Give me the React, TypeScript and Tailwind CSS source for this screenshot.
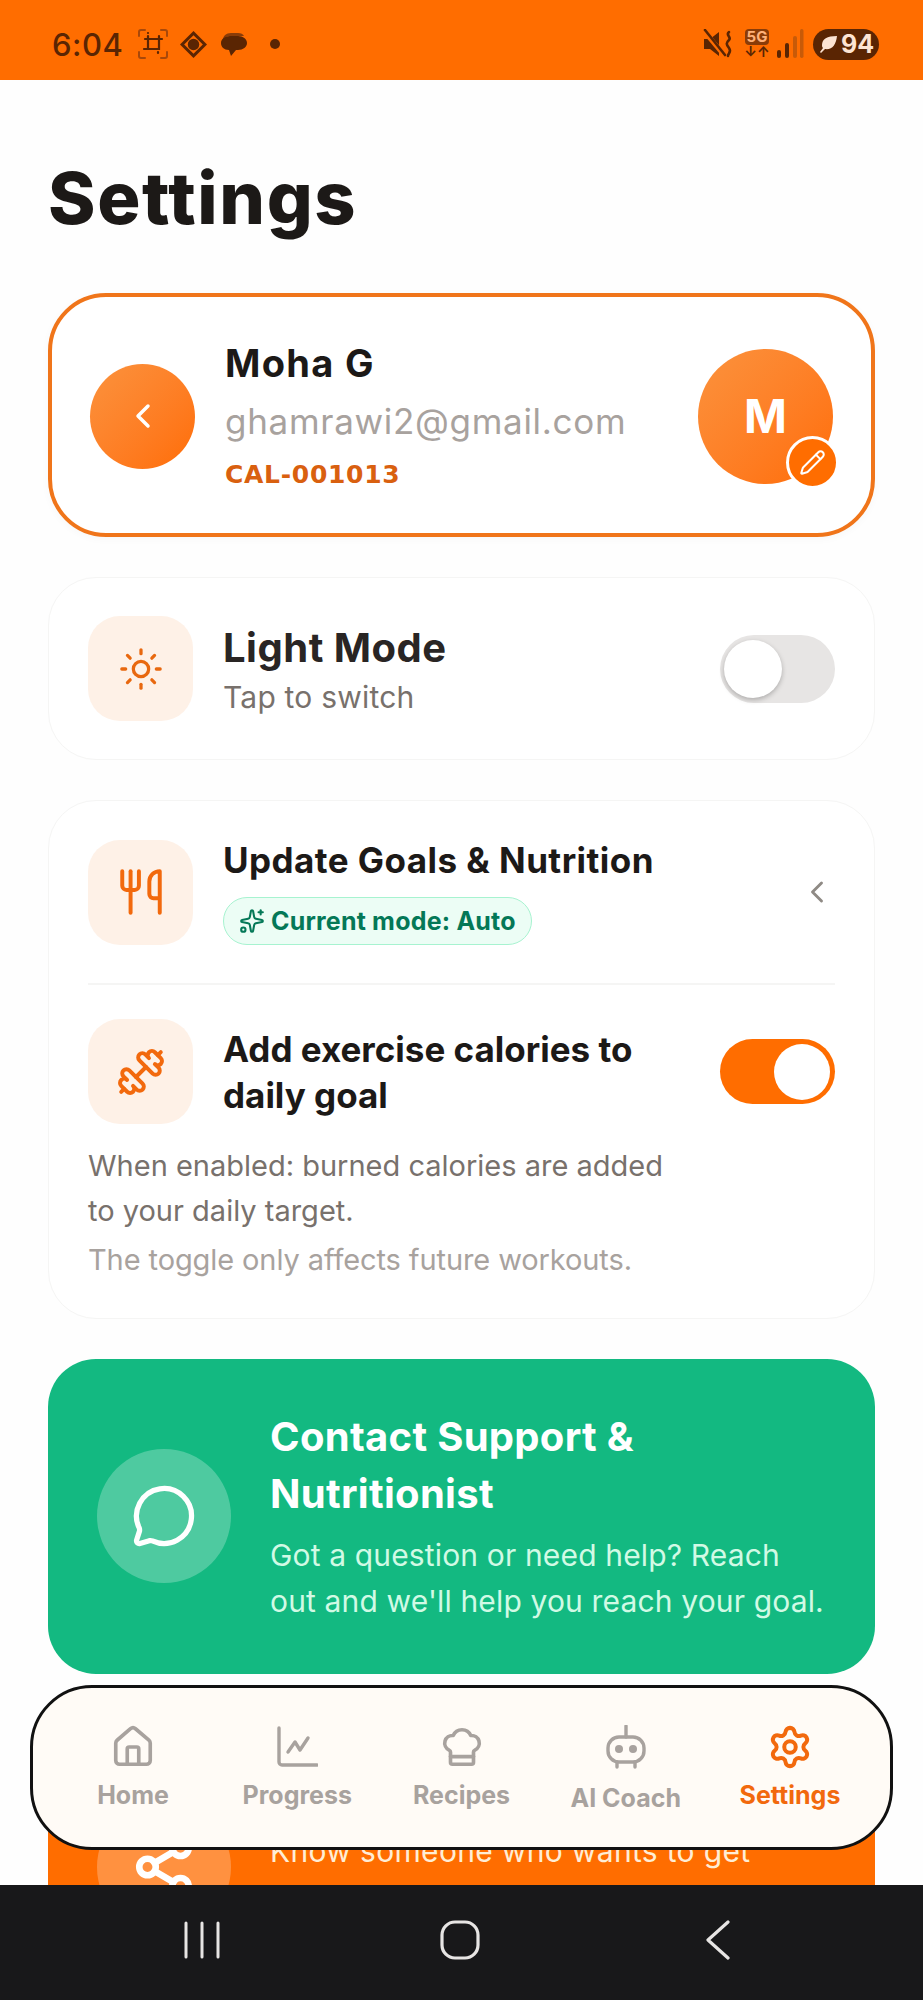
import React from "react";
import { ChevronLeft, Sun, Utensils, Dumbbell, Sparkles, MessageCircle, Share2, House, ChefHat, Settings, Pencil } from "lucide-react";

const Crop = () => (
  <svg width="32" height="32" viewBox="0 0 32 32" fill="none" strokeLinecap="round">
    <path d="M2 8V4a2 2 0 0 1 2-2h4M24 2h4a2 2 0 0 1 2 2v4M30 24v4a2 2 0 0 1-2 2h-4M8 30H4a2 2 0 0 1-2-2v-4" stroke="#a8480a" strokeWidth="2" />
    <path d="M7 21h15V8M11 5v0M11 8v13M8 11h17M21 24v1" stroke="#5a2503" strokeWidth="2.2" />
  </svg>
);
const Diamond = () => (
  <svg width="27" height="27" viewBox="0 0 26 26">
    <path d="M13 0l13 13-13 13L0 13z" fill="#5a2503" />
    <path d="M13 4l9 9-9 9-9-9z" fill="#ff6d00" />
    <circle cx="13" cy="13" r="5.5" fill="#5a2503" />
  </svg>
);
const Chat = () => (
  <svg width="28" height="26" viewBox="0 0 28 26">
    <path d="M3 9c0-4 3-7 8-7h7c3 0 5 1 6 3H10C6 5 4 7 3 9z" fill="#8a3c08" />
    <path d="M1 12c0-4 4-7 9-7h8c5 0 9 3 9 7s-4 7-9 7h-2l-5 6-2-6C4 19 1 16 1 12z" fill="#5a2503" />
  </svg>
);
const Mute = () => (
  <svg width="32" height="30" viewBox="0 0 32 30" fill="none">
    <path d="M1 10h6l9-7v24l-9-7H1z" fill="#5a2503" />
    <path d="M1 2l20 24" stroke="#ff6d00" strokeWidth="5" />
    <path d="M2 1l20 25" stroke="#5a2503" strokeWidth="2.6" strokeLinecap="round" />
    <path d="M26 3c-4 3 3 5 0 8s-3 4 0 8-1 5-1 8" stroke="#5a2503" strokeWidth="2.6" strokeLinecap="round" />
  </svg>
);
const Signal = () => (
  <svg width="28" height="30" viewBox="0 0 28 30">
    <rect x="1" y="21" width="4" height="8" rx="2" fill="#5a2503" />
    <rect x="9" y="14" width="4" height="15" rx="2" fill="#5a2503" />
    <rect x="17" y="7" width="4" height="22" rx="2" fill="#c85a08" />
    <rect x="24" y="0" width="3.5" height="29" rx="1.7" fill="#c85a08" />
  </svg>
);
const Leaf = () => (
  <svg width="20" height="18" viewBox="0 0 20 18">
    <path d="M19 1C9 1 4 4 4 10c0 1 0 2 1 3L2 17l1 1 4-4c7 1 11-4 12-13z" fill="#fde4d3" />
  </svg>
);
const Progress = () => (
  <svg width="42" height="42" viewBox="0 0 42 42" fill="none" stroke="#a8a29e" strokeWidth="3.4" strokeLinecap="round" strokeLinejoin="round">
    <path d="M3 2v34a3 3 0 0 0 3 3h35" />
    <path d="M12 26l7-10 5 8 8-12" />
  </svg>
);
const BotIcon = () => (
  <svg width="42" height="44" viewBox="0 0 42 44" fill="none">
    <path d="M21 1v11" stroke="#a8a29e" strokeWidth="3.4" strokeLinecap="round" />
    <rect x="3" y="12" width="36" height="25" rx="11" stroke="#a8a29e" strokeWidth="3.4" />
    <circle cx="14" cy="24" r="4" fill="#a8a29e" />
    <circle cx="28" cy="24" r="4" fill="#a8a29e" />
    <path d="M12 37v5M30 37v5" stroke="#a8a29e" strokeWidth="3.4" strokeLinecap="round" />
  </svg>
);

const Tile = ({ children }: { children: React.ReactNode }) => (
  <div className="flex h-[105px] w-[105px] flex-none items-center justify-center rounded-[32px] bg-[#fef1e7]">{children}</div>
);

const nav = [
  { label: "Home", icon: <House size={46} strokeWidth={1.9} color="#a8a29e" />, active: false },
  { label: "Progress", icon: <Progress />, active: false },
  { label: "Recipes", icon: <ChefHat size={46} strokeWidth={1.9} color="#a8a29e" />, active: false },
  { label: "AI Coach", icon: <BotIcon />, active: false },
  { label: "Settings", icon: <Settings size={46} strokeWidth={2.1} color="#f2690d" />, active: true },
];

export default function App() {
  return (
    <div className="flex h-[2000px] w-[923px] flex-col overflow-hidden bg-[#fefefe] font-[Inter,sans-serif]">
      <div className="flex h-[80px] flex-none items-center justify-between bg-[#ff6d00] pl-[52px] pr-[44px] pt-[8px] text-[#5a2503]">
        <div className="flex items-center">
          <span className="mr-[14px] text-[31px] font-medium leading-none tracking-[0.5px]">6:04</span>
          <Crop />
          <span className="ml-[11px]"><Diamond /></span>
          <span className="ml-[13px]"><Chat /></span>
          <span className="ml-[22px] h-[10px] w-[10px] rounded-full bg-[#5a2503]" />
        </div>
        <div className="flex items-center">
          <Mute />
          <div className="ml-[8px] flex w-[28px] flex-col items-center">
            <span className="rounded-[4px] bg-[#8a3c08] px-[2px] text-[15px] font-bold leading-[16px] text-[#ffb27a]">5G</span>
            <span className="text-[14px] font-bold leading-[14px]">↓↑</span>
          </div>
          <span className="ml-[5px]"><Signal /></span>
          <div className="ml-[9px] flex h-[31px] w-[66px] items-center justify-center gap-[3px] rounded-full bg-[#5a2503] text-[25px] font-bold leading-none text-[#fde4d3]">
            <Leaf />
            94
          </div>
        </div>
      </div>

      <div className="relative min-h-0 flex-1 overflow-hidden">
        <div className="px-[48px] pt-[78px]">
          <h1 className="mb-[55px] text-[72px] font-extrabold leading-[80px] tracking-[1.6px] text-[#1c1917]">Settings</h1>

          <div className="flex items-center rounded-[58px] border-[4px] border-[#f0751a] bg-white px-[38px] pb-[41px] pt-[43px] shadow-[0_2px_8px_rgba(0,0,0,0.03)]">
            <div className="flex h-[105px] w-[105px] flex-none items-center justify-center rounded-full bg-linear-to-br from-[#fb923c] to-[#ff6d00] text-white">
              <ChevronLeft size={40} strokeWidth={2.1} />
            </div>
            <div className="ml-[30px] flex-1">
              <div className="text-[38px] font-bold leading-[46px] tracking-[1.3px] text-[#1c1917]">Moha G</div>
              <div className="mt-[10px] text-[35px] leading-[50px] tracking-[0.7px] text-[#a8a29e]">ghamrawi2@gmail.com</div>
              <div className="mt-[12px] font-['DejaVu_Sans',sans-serif] text-[25px] font-bold leading-[34px] tracking-[0.7px] text-[#d9600f]">CAL-001013</div>
            </div>
            <div className="relative flex h-[135px] w-[135px] flex-none items-center justify-center rounded-full bg-linear-to-br from-[#fb923c] to-[#ff6d00] text-[46px] font-bold text-white">
              M
              <div className="absolute bottom-[-5px] right-[-6px] flex h-[53px] w-[53px] items-center justify-center rounded-full border-[3px] border-white bg-[#ff6d00]">
                <Pencil size={27} strokeWidth={1.8} color="#fff" />
              </div>
            </div>
          </div>

          <div className="mt-[40px] flex items-center rounded-[48px] border border-[#f5f5f4] bg-white px-[39px] py-[38px]">
            <Tile><Sun size={46} strokeWidth={1.7} color="#e8680f" /></Tile>
            <div className="ml-[30px] flex-1 pt-[5px]">
              <div className="text-[40px] font-bold leading-[46px] tracking-[0.5px] text-[#292524]">Light Mode</div>
              <div className="mt-[6px] text-[30px] leading-[40px] tracking-[0.2px] text-[#78716c]">Tap to switch</div>
            </div>
            <div className="flex h-[68px] w-[115px] flex-none items-center rounded-full bg-[#e7e5e4] p-[4px]">
              <div className="h-[58px] w-[58px] rounded-full bg-white shadow-[0_2px_5px_rgba(0,0,0,0.25)]" />
            </div>
          </div>

          <div className="mt-[40px] rounded-[48px] border border-[#f5f5f4] bg-white px-[39px] pb-[36px] pt-[38px]">
            <div className="flex items-center border-b-2 border-[#f5f5f4] pb-[38px]">
              <Tile><Utensils size={50} strokeWidth={1.9} color="#f2690d" /></Tile>
              <div className="ml-[30px] flex-1">
                <div className="text-[35px] font-bold leading-[42px] tracking-[0.45px] text-[#1c1917]">Update Goals &amp; Nutrition</div>
                <div className="mt-[16px] inline-flex h-[48px] items-center gap-[6px] rounded-full border border-[#a7f3d0] bg-[#ecfdf5] px-[15px] text-[#047857]">
                  <Sparkles size={26} strokeWidth={1.9} />
                  <span className="text-[25px] font-bold leading-none tracking-[0.2px]">Current mode: Auto</span>
                </div>
              </div>
              <ChevronLeft size={36} strokeWidth={1.9} color="#8f8a85" />
            </div>

            <div className="mt-[34px] flex items-start">
              <Tile><Dumbbell size={50} strokeWidth={1.9} color="#f2690d" /></Tile>
              <div className="ml-[30px] flex-1 pr-[40px] pt-[7px] text-[35px] font-bold leading-[46px] text-[#1c1917]">Add exercise calories to daily goal</div>
              <div className="mt-[20px] flex h-[65px] w-[115px] flex-none items-center justify-end rounded-full bg-[#ff6d00] p-[5px]">
                <div className="h-[56px] w-[56px] rounded-full bg-white" />
              </div>
            </div>
            <p className="mt-[19px] w-[590px] text-[29px] leading-[45px] text-[#78716c]">When enabled: burned calories are added to your daily target.</p>
            <p className="mt-[4px] text-[29px] leading-[45px] tracking-[-0.1px] text-[#a8a29e]">The toggle only affects future workouts.</p>
          </div>

          <div className="mt-[40px] flex items-center rounded-[48px] bg-[#13b981] pb-[50px] pl-[49px] pr-[50px] pt-[49px]">
            <div className="flex h-[134px] w-[134px] flex-none items-center justify-center rounded-full bg-white/25 text-white">
              <MessageCircle size={66} strokeWidth={1.9} />
            </div>
            <div className="ml-[39px] flex-1">
              <div className="text-[40px] font-bold leading-[57px] tracking-[0.3px] text-white">Contact Support &amp; Nutritionist</div>
              <div className="mt-[10px] text-[30px] leading-[46px] tracking-[0.15px] text-[#d1fae5]">Got a question or need help? Reach out and we'll help you reach your goal.</div>
            </div>
          </div>

          <div className="mt-[40px] flex h-[300px] items-start rounded-[48px] bg-[#ff6d00] pl-[49px] pr-[30px] pt-[86px]">
            <div className="flex h-[134px] w-[134px] flex-none items-center justify-center rounded-full bg-white/25 text-white">
              <Share2 size={66} strokeWidth={2.4} />
            </div>
            <div className="ml-[39px] flex-1 pt-[28px]">
              <div className="text-[30px] leading-[46px] tracking-[0.33px] text-[#ffedd5]">Know someone who wants to get</div>
            </div>
          </div>
        </div>

        <nav className="absolute left-[30px] top-[1605px] flex h-[165px] w-[863px] items-start justify-between rounded-[62px] border-[3px] border-[#111] bg-[#fffbf6] px-[18px] pt-[36px]">
          {nav.map((n) => (
            <div key={n.label} className="flex w-[164px] flex-col items-center">
              <div className="flex h-[46px] items-center justify-center">{n.icon}</div>
              <span className={`mt-[10px] text-[25px] font-bold leading-[30px] ${n.active ? "text-[#f2690d]" : "text-[#a8a29e]"} ${n.label === "AI Coach" ? "pt-[3px]" : ""}`}>{n.label}</span>
            </div>
          ))}
        </nav>
      </div>

      <div className="flex h-[115px] flex-none items-center justify-between bg-[#18181a] pb-[6px] pl-[183px] pr-[192px]">
        <svg width="38" height="38" viewBox="0 0 38 38" stroke="#e7e5e4" strokeWidth="3" strokeLinecap="round">
          <path d="M3 2v34M19 2v34M35 2v34" />
        </svg>
        <svg className="mr-[6px]" width="40" height="40" viewBox="0 0 40 40" fill="none" stroke="#e7e5e4" strokeWidth="3.2">
          <rect x="2" y="2" width="36" height="36" rx="13" />
        </svg>
        <svg width="26" height="40" viewBox="0 0 26 40" fill="none" stroke="#e7e5e4" strokeWidth="3.2" strokeLinecap="round" strokeLinejoin="round">
          <path d="M23 2L3 20l20 18" />
        </svg>
      </div>
    </div>
  );
}
